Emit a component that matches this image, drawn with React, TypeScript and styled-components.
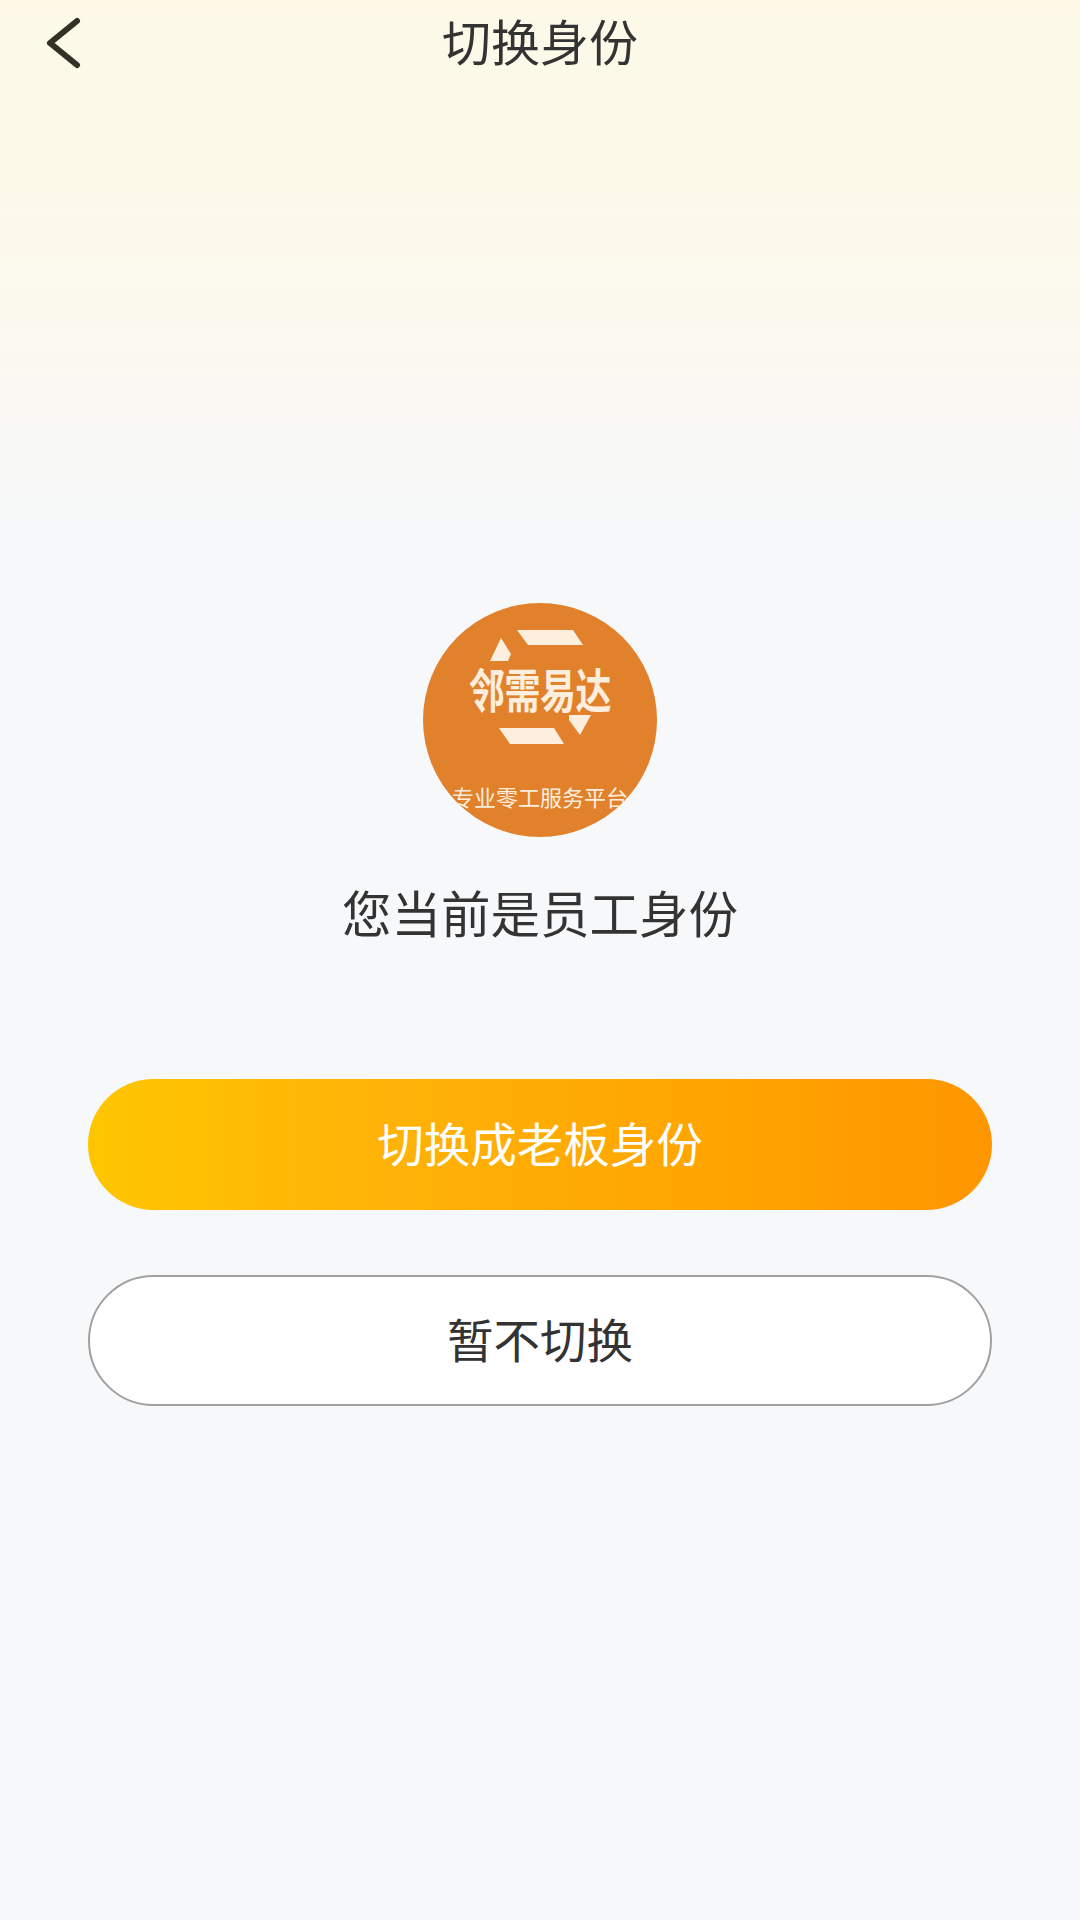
import React from 'react';
import styled, { createGlobalStyle } from 'styled-components';

const GlobalStyle = createGlobalStyle`
  html, body {
    margin: 0;
    padding: 0;
    background: #f6f8fa;
  }
  * {
    box-sizing: border-box;
  }
`;

const Page = styled.div`
  width: 1080px;
  height: 1920px;
  overflow: hidden;
  display: flex;
  flex-direction: column;
  align-items: center;
  background: linear-gradient(180deg, #fef7e6 0, #fdf9e9 24px, #fdf9e9 170px, #fbf9ef 320px, #f9f8f4 420px, #f6f8fa 540px, #f6f8fa 100%);
  font-family: "Noto Sans CJK SC", "Noto Sans", sans-serif;
  color: #333;
`;

const Header = styled.header`
  position: relative;
  width: 100%;
  height: 86px;
  padding-bottom: 7px;
  display: flex;
  align-items: center;
  justify-content: center;
`;

const BackIcon = styled.svg`
  position: absolute;
  left: 44px;
  top: 15px;
`;

const Title = styled.h1`
  margin: 0;
  font-size: 49px;
  line-height: 60px;
  font-weight: 400;
  color: #333;
`;

const Logo = styled.div`
  position: relative;
  width: 234px;
  height: 234px;
  margin-top: 517px;
  border-radius: 50%;
  overflow: hidden;
  background: #e1812c;
`;

const LogoMark = styled.svg`
  position: absolute;
  left: 0;
  top: 0;
`;

const LogoName = styled.div`
  position: absolute;
  left: 0;
  right: 0;
  top: 60px;
  text-align: center;
  font-size: 36px;
  line-height: 48px;
  font-weight: 700;
  letter-spacing: -0.5px;
  color: #fdeedd;
  transform: scaleY(1.3);
`;

const LogoSlogan = styled.div`
  position: absolute;
  left: -10px;
  right: -10px;
  top: 178px;
  text-align: center;
  font-size: 22px;
  line-height: 30px;
  color: #fdeedd;
`;

const Status = styled.p`
  margin: 45px 0 0;
  font-size: 49.5px;
  line-height: 60px;
  font-weight: 400;
  color: #333;
`;

const Actions = styled.div`
  width: 904px;
  margin-top: 137px;
  display: flex;
  flex-direction: column;
  gap: 65px;
`;

const Button = styled.button<{ $primary?: boolean }>`
  width: 100%;
  height: 131px;
  padding: 0 0 6px;
  border-radius: 66px;
  border: ${p => (p.$primary ? 'none' : '2px solid #a0a0a0')};
  background: ${p => (p.$primary ? 'linear-gradient(90deg, #ffc600 0%, #ffb408 30%, #ffa400 70%, #ff9600 100%)' : '#fff')};
  color: ${p => (p.$primary ? '#fff' : '#333')};
  font-family: inherit;
  font-size: 46.5px;
  line-height: 60px;
`;

export default function App() {
  return (
    <Page>
      <GlobalStyle />
      <Header>
        <BackIcon width="40" height="56" viewBox="0 0 40 56" fill="none">
          <path d="M33 6 L6 28 L33 50" stroke="#333028" strokeWidth="6" strokeLinecap="round" strokeLinejoin="round" />
        </BackIcon>
        <Title>切换身份</Title>
      </Header>
      <Logo>
        <LogoMark width="234" height="234" viewBox="0 0 234 234" fill="#fdeedd">
          <polygon points="94,27 150,27 160,42 105,42" />
          <polygon points="78,35 88,51 85,58 67,58" />
          <polygon points="76,125 131,125 141,141 87,141" />
          <polygon points="146,112 168,112 157,132 146,117" />
        </LogoMark>
        <LogoName>邻需易达</LogoName>
        <LogoSlogan>专业零工服务平台</LogoSlogan>
      </Logo>
      <Status>您当前是员工身份</Status>
      <Actions>
        <Button $primary>切换成老板身份</Button>
        <Button>暂不切换</Button>
      </Actions>
    </Page>
  );
}
